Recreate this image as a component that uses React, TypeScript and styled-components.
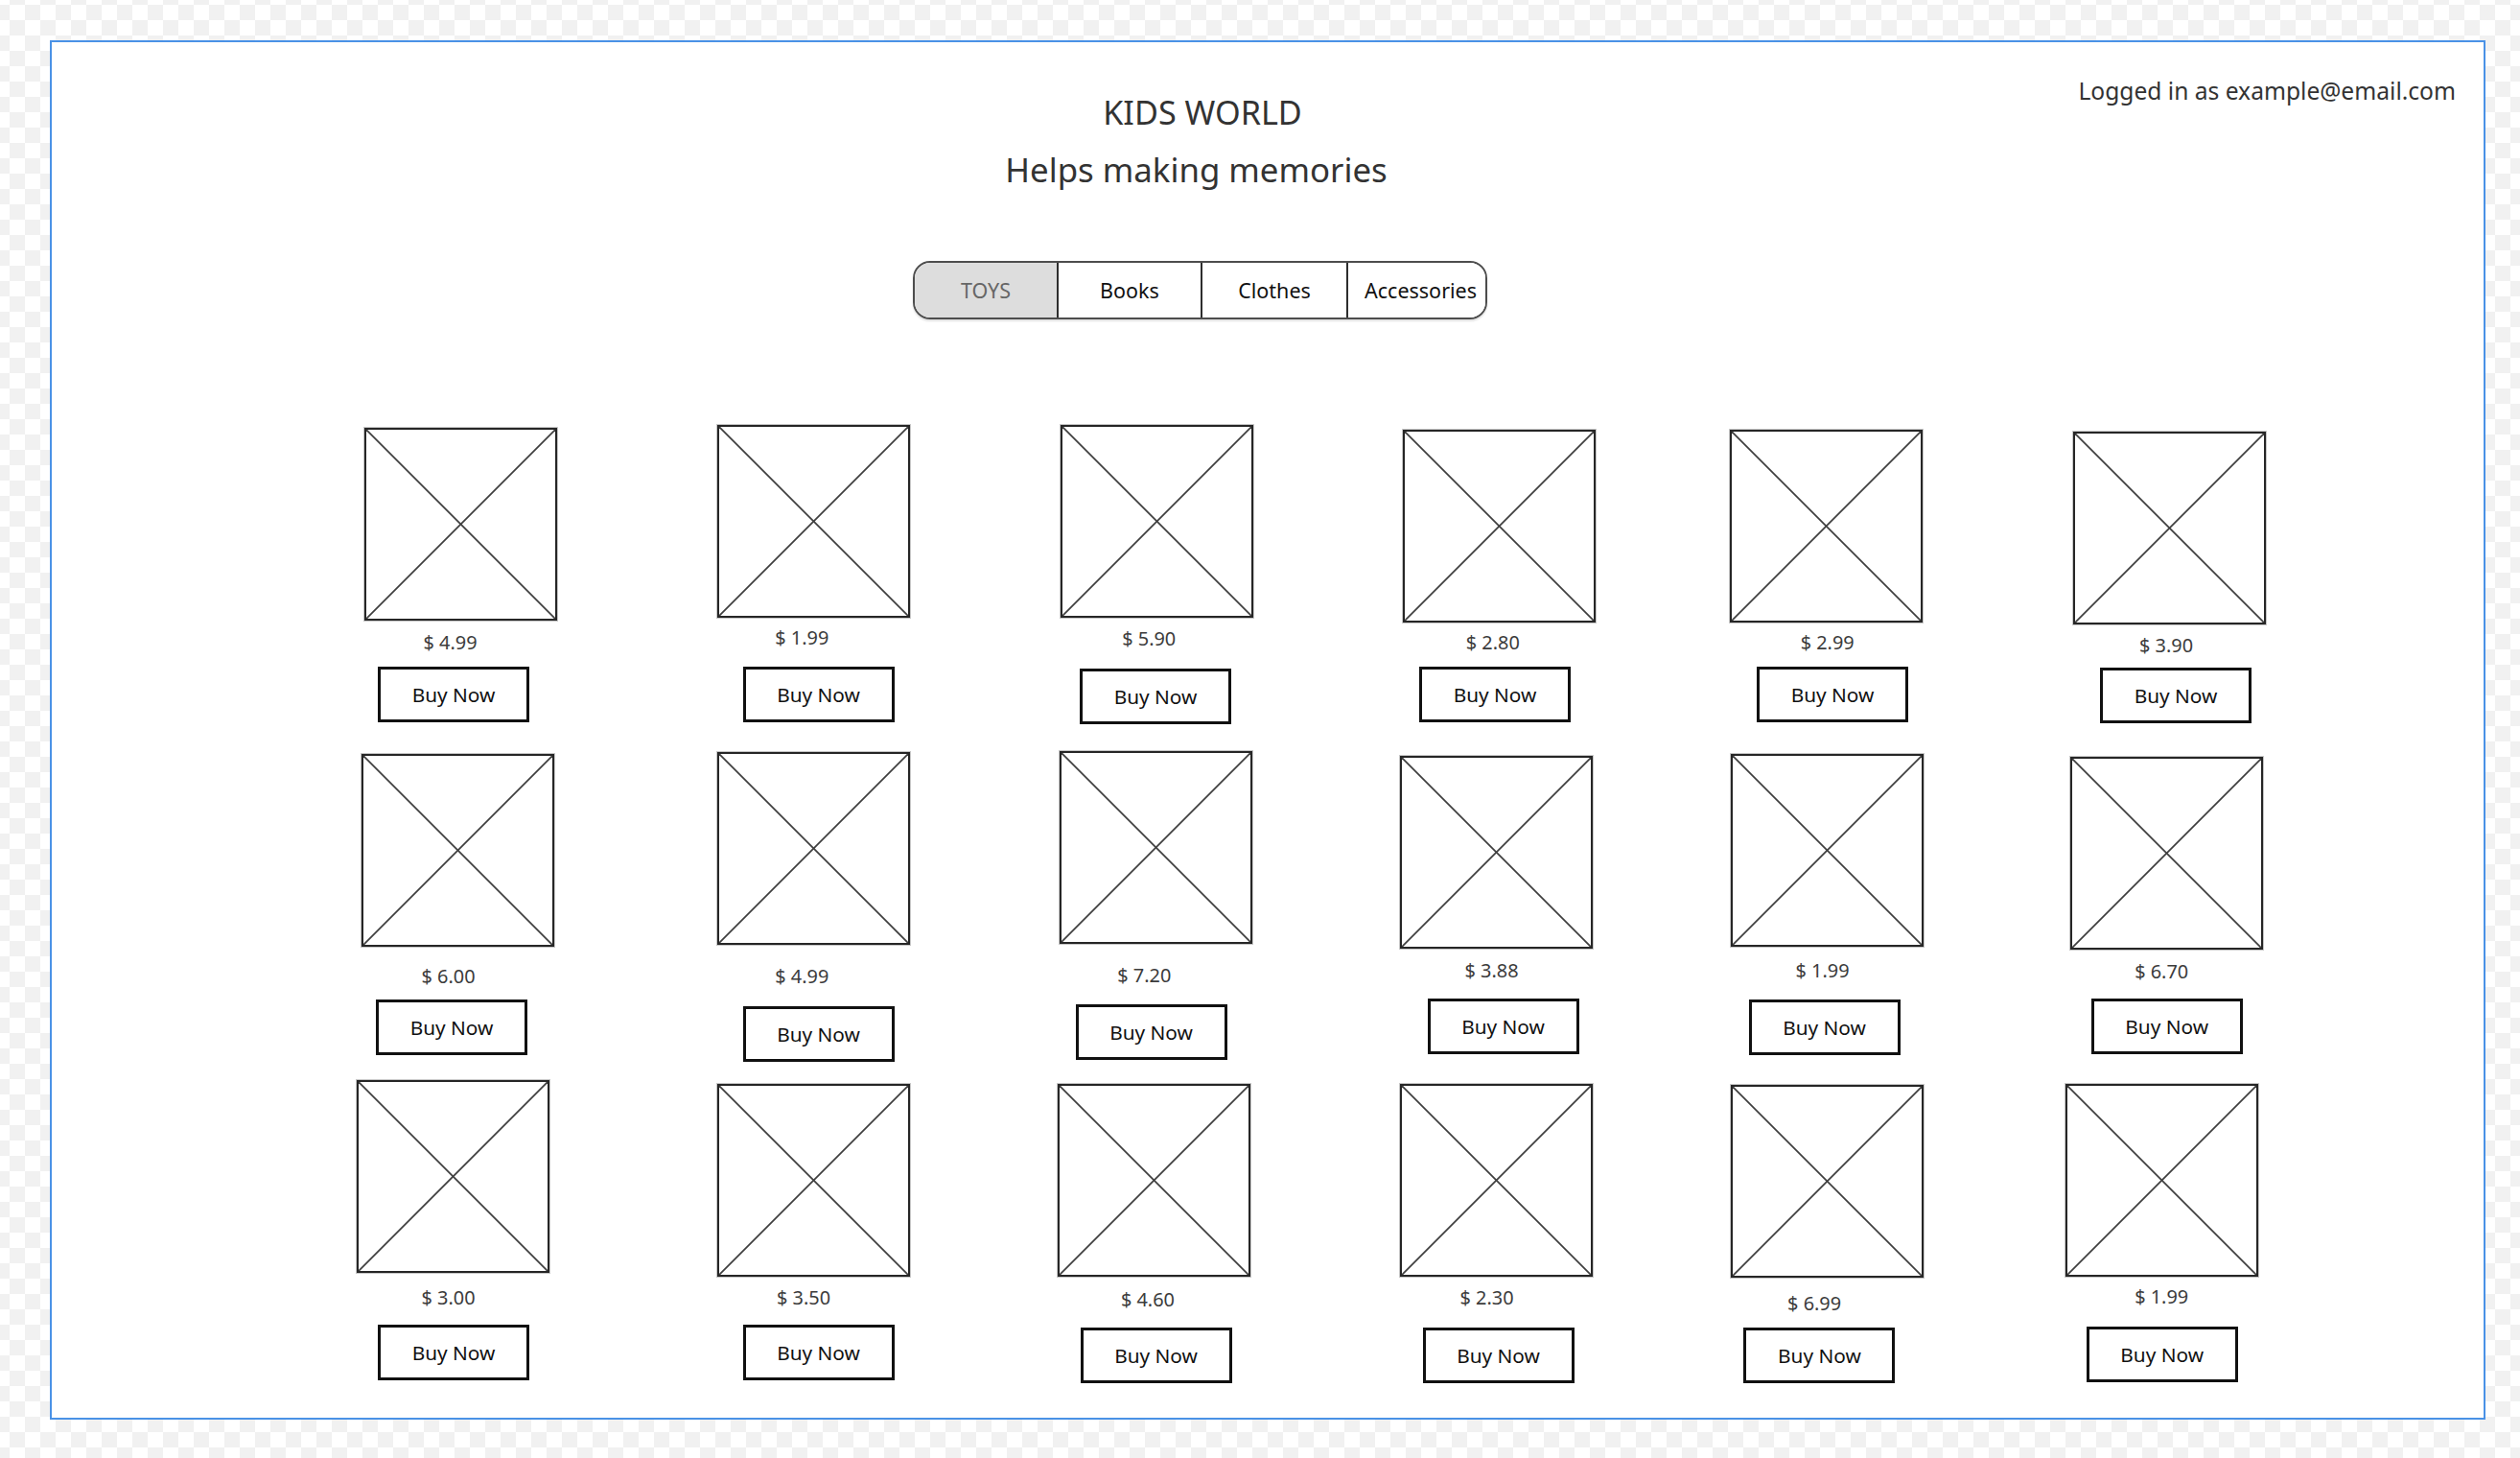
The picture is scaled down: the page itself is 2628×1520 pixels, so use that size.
import React from "react";
import styled, { createGlobalStyle } from "styled-components";

const GlobalStyle = createGlobalStyle`
  html, body {
    margin: 0;
    padding: 0;
    min-height: 100%;
  }
  body {
    font-family: "Noto Sans", "Open Sans", sans-serif;
    color: #333;
    background-color: #ffffff;
    background-image: conic-gradient(#f1f1f1 25%, #ffffff 0 50%, #f1f1f1 0 75%, #ffffff 0);
    background-size: 32px 32px;
    background-position: -6px -11px;
  }
  * { box-sizing: border-box; }
`;

const Page = styled.div`
  padding: 42px 0 0 52px;
  min-height: 1520px;
`;

const Frame = styled.main`
  width: 2540px;
  height: 1438px;
  border: 2px solid #4a92e6;
  background: #ffffff;
  display: flex;
  flex-direction: column;
`;

const TopRow = styled.header`
  display: flex;
  align-items: flex-start;
`;

const Brand = styled.div`
  width: 500px;
  margin-left: 946px;
  margin-top: 53px;
  display: flex;
  flex-direction: column;
  align-items: center;
  text-align: center;
  color: #333;
`;

const Title = styled.h1`
  margin: 0;
  padding-left: 8px;
  font-size: 34.2px;
  line-height: 40px;
  font-weight: 400;
`;

const Tagline = styled.h2`
  margin: 18px 0 0;
  padding-right: 5px;
  font-size: 34.8px;
  line-height: 44px;
  font-weight: 400;
`;

const LoggedIn = styled.div`
  margin-left: auto;
  margin-top: 36px;
  padding-right: 29px;
  font-size: 24.6px;
  line-height: 30px;
  color: #333;
  white-space: nowrap;
`;

const Tabs = styled.nav`
  margin: 73px 0 0 898px;
  width: 599px;
  height: 61px;
  display: flex;
  border: 2px solid #4d4d4d;
  border-radius: 18px;
  overflow: hidden;
  box-shadow: 0 2px 2px rgba(0, 0, 0, 0.12);
`;

const Tab = styled.button<{ $active?: boolean; $w: number; $pl: number }>`
  flex: 0 0 ${(p) => p.$w}px;
  border: none;
  border-left: 2px solid #2e2e2e;
  &:first-child { border-left: none; }
  margin: 0;
  padding: 0 0 0 ${(p) => p.$pl}px;
  font-family: inherit;
  font-size: 21.5px;
  line-height: 57px;
  background: ${(p) => (p.$active ? "#dddddd" : "#ffffff")};
  color: ${(p) => (p.$active ? "#666666" : "#111111")};
  cursor: pointer;
  white-space: nowrap;
`;

const Grid = styled.section`
  margin: 107px 0 0 318px;
  display: grid;
  grid-template-columns: 372px 356px 356px 344px 352px 240px;
  grid-template-rows: 340px 344px auto;
`;

const Card = styled.article<{ $ix: number; $iy: number }>`
  display: flex;
  flex-direction: column;
  align-items: flex-start;
  padding-left: ${(p) => p.$ix}px;
  padding-top: ${(p) => p.$iy}px;
`;

const Placeholder = styled.div`
  width: 201px;
  height: 201px;
  border: 2px solid #262626;
  box-shadow: 0 0 0 1px rgba(0, 0, 0, 0.22);
  background: #fff;
  svg {
    display: block;
    width: 100%;
    height: 100%;
  }
`;

const Price = styled.div<{ $mt: number; $dx: number }>`
  width: 201px;
  height: 30px;
  line-height: 30px;
  margin-top: ${(p) => p.$mt}px;
  margin-left: ${(p) => p.$dx}px;
  text-align: center;
  font-size: 19.9px;
  color: #3c3c3c;
  white-space: nowrap;
`;

const BuyButton = styled.button<{ $mt: number; $dx: number }>`
  width: 158px;
  height: 58px;
  margin-top: ${(p) => p.$mt}px;
  margin-left: ${(p) => p.$dx}px;
  padding: 0;
  border: 3px solid #111;
  background: #fff;
  font-family: inherit;
  font-size: 20.8px;
  line-height: 52px;
  color: #111;
  cursor: pointer;
`;

type Item = {
  price: string;
  ix: number;
  iy: number;
  pmt: number;
  pdx: number;
  bmt: number;
  bdx: number;
};

const items: Item[] = [
  { price: "4.99", ix: 8, iy: 6, pmt: 8, pdx: -11, bmt: 10, bdx: 14 },
  { price: "1.99", ix: 3.5, iy: 2.5, pmt: 6.2, pdx: -11.7, bmt: 15.8, bdx: 27 },
  { price: "5.90", ix: 6, iy: 2.5, pmt: 7.8, pdx: -8.3, bmt: 15.9, bdx: 20 },
  { price: "2.80", ix: 7, iy: 7.5, pmt: 6.2, pdx: -6.7, bmt: 10.8, bdx: 17 },
  { price: "2.99", ix: 3.5, iy: 7.5, pmt: 6.2, pdx: 1.7, bmt: 10.8, bdx: 28.5 },
  { price: "3.90", ix: 10, iy: 10, pmt: 7.3, pdx: -3.5, bmt: 7.7, bdx: 28 },

  { price: "6.00", ix: 5, iy: 6, pmt: 16.3, pdx: -10, bmt: 9.2, bdx: 15 },
  { price: "4.99", ix: 3.5, iy: 4.4, pmt: 17.9, pdx: -11.7, bmt: 15.9, bdx: 27 },
  { price: "7.20", ix: 4.5, iy: 2.7, pmt: 17.9, pdx: -11.7, bmt: 15.9, bdx: 17 },
  { price: "3.88", ix: 4, iy: 7.7, pmt: 7.9, pdx: -5, bmt: 14.2, bdx: 28.5 },
  { price: "1.99", ix: 5, iy: 6, pmt: 9.6, pdx: -5, bmt: 15.9, bdx: 18.5 },
  { price: "6.70", ix: 6.7, iy: 9.4, pmt: 7.9, pdx: -5, bmt: 12.5, bdx: 22 },

  { price: "3.00", ix: 0, iy: 2.3, pmt: 11.2, pdx: -5, bmt: 12.5, bdx: 22 },
  { price: "3.50", ix: 3.5, iy: 5.6, pmt: 7.9, pdx: -10, bmt: 12.5, bdx: 27 },
  { price: "4.60", ix: 3, iy: 5.6, pmt: 9.6, pdx: -6.6, bmt: 14.2, bdx: 23.5 },
  { price: "2.30", ix: 4, iy: 5.6, pmt: 7.9, pdx: -10, bmt: 15.9, bdx: 23.5 },
  { price: "6.99", ix: 5, iy: 7.3, pmt: 11.3, pdx: -13.4, bmt: 10.8, bdx: 13.4 },
  { price: "1.99", ix: 1.7, iy: 5.6, pmt: 6.2, pdx: 0, bmt: 15.9, bdx: 22 },
];

const ImagePlaceholder = () => (
  <Placeholder>
    <svg viewBox="0 0 197 197" preserveAspectRatio="none">
      <line x1="0" y1="0" x2="197" y2="197" stroke="#3f3f3f" strokeWidth="1.8" />
      <line x1="197" y1="0" x2="0" y2="197" stroke="#3f3f3f" strokeWidth="1.8" />
    </svg>
  </Placeholder>
);

const tabs: { label: string; w: number; pl: number }[] = [
  { label: "TOYS", w: 148, pl: 0 },
  { label: "Books", w: 150, pl: 0 },
  { label: "Clothes", w: 152, pl: 0 },
  { label: "Accessories", w: 145, pl: 8 },
];

export default function App() {
  return (
    <>
      <GlobalStyle />
      <Page>
        <Frame>
          <TopRow>
            <Brand>
              <Title>KIDS WORLD</Title>
              <Tagline>Helps making memories</Tagline>
            </Brand>
            <LoggedIn>Logged in as example@email.com</LoggedIn>
          </TopRow>
          <Tabs>
            {tabs.map((t, i) => (
              <Tab key={t.label} $active={i === 0} $w={t.w} $pl={t.pl}>
                {t.label}
              </Tab>
            ))}
          </Tabs>
          <Grid>
            {items.map((it, i) => (
              <Card key={i} $ix={it.ix} $iy={it.iy}>
                <ImagePlaceholder />
                <Price $mt={it.pmt} $dx={it.pdx}>
                  $ {it.price}
                </Price>
                <BuyButton $mt={it.bmt} $dx={it.bdx}>
                  Buy Now
                </BuyButton>
              </Card>
            ))}
          </Grid>
        </Frame>
      </Page>
    </>
  );
}
